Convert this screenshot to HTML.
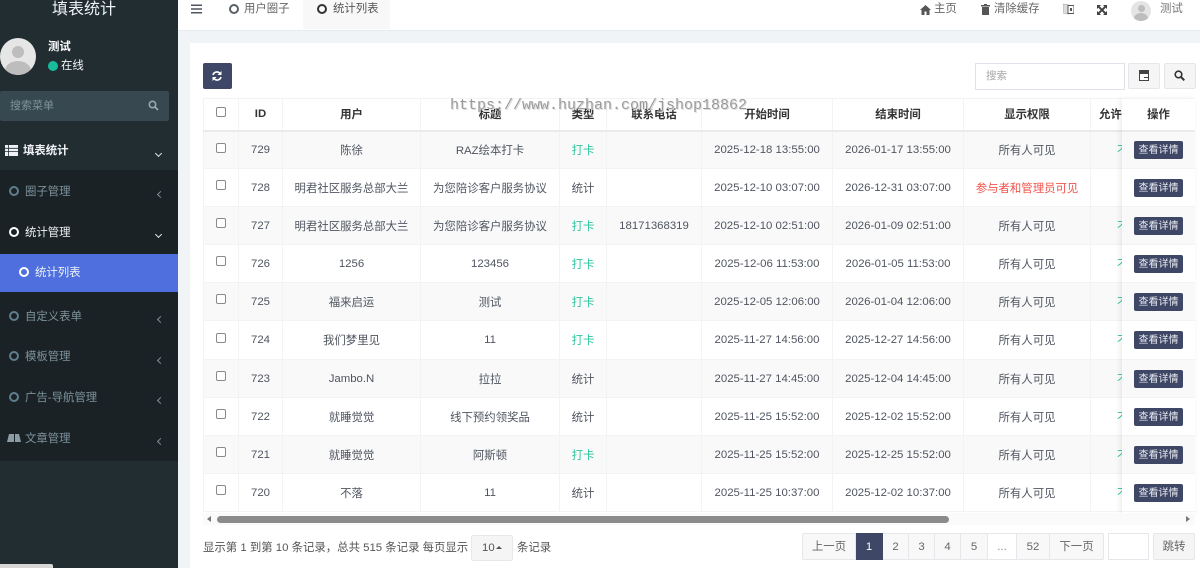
<!DOCTYPE html>
<html lang="zh">
<head>
<meta charset="utf-8">
<title>填表统计</title>
<style>
*{box-sizing:border-box;margin:0;padding:0}
html,body{width:1200px;height:568px;overflow:hidden;background:#f1f4f6}
body{position:relative;font-family:"Liberation Sans","Noto Sans CJK SC",sans-serif;font-size:11.4px;color:#4f5560}
.a{position:absolute;white-space:nowrap}
#side{position:absolute;left:0;top:0;width:178px;height:568px;background:#222d32;overflow:hidden}
#dark{position:absolute;left:0;top:170px;width:178px;height:291px;background:#1a2226}
#act{position:absolute;left:0;top:254px;width:178px;height:38px;background:#4e6fdd}
.m{position:absolute;left:25px;color:#7d929c;line-height:16px;white-space:nowrap;margin-top:1px}
.o{position:absolute;left:9px;width:10px;height:10px;border:2px solid #5f7e8e;border-radius:50%}
.c{position:absolute;left:158px;width:5px;height:5px;border-left:1px solid #7d929c;border-bottom:1px solid #7d929c;transform:rotate(45deg)}
.d{position:absolute;left:156px;width:5px;height:5px;border-left:1.5px solid #dfe6ea;border-bottom:1.5px solid #dfe6ea;transform:rotate(-45deg)}
#top{position:absolute;left:178px;top:0;width:1022px;height:31px;background:#fff;border-bottom:1px solid #e8ebee}
#panel{position:absolute;left:190px;top:43px;width:1010px;height:525px;background:#fff}
table{border-collapse:collapse;table-layout:fixed;position:absolute}
td,th{border:1px solid #f2f3f4;text-align:center;white-space:nowrap;overflow:hidden;font-weight:400;vertical-align:middle;color:#4f5560}
th{font-weight:700;color:#333;height:32px;border-bottom:2px solid #e9eaec}
td{height:38px}
tr.t td{height:39px}
tr.s td{background:#f9f9f9}
.g{color:#2ec4a0}
td.r{color:#f4524a}
td.g{color:#2ec4a0}
.cb{display:inline-block;position:relative;top:-2px;width:10px;height:10px;border:1px solid #8a8a8a;border-radius:2px;background:#fff;vertical-align:middle}
.al{text-align:left;padding-left:26px}
.b{display:inline-block;width:49px;height:18px;line-height:19px;background:#3f4766;color:#e9ebf0;border-radius:2px;font-size:10px;vertical-align:middle}
.p{position:absolute;top:533px;height:27px;line-height:27px;text-align:center;background:#f8f8f8;border:1px solid #e5e7ea;border-left:0;color:#666}
#wm{position:absolute;left:450px;top:97px;font-family:"Liberation Mono",monospace;font-size:15px;color:#999;white-space:nowrap;text-shadow:0 0 1px #fff,1px 1px 0 #d8d8d8}
</style>
</head>
<body>
<div id="side">
  <div class="a" style="left:52px;top:1px;font-size:16px;line-height:18px;color:#eef2f4">填表统计</div>
  <div class="a" style="left:0;top:38px;width:36px;height:37px;border-radius:50%;background:#e6e6e6;overflow:hidden">
    <div style="position:absolute;left:12px;top:8px;width:12px;height:12px;border-radius:50%;background:#bdbdbd"></div>
    <div style="position:absolute;left:5px;top:23px;width:26px;height:20px;border-radius:50%;background:#bdbdbd"></div>
  </div>
  <div class="a" style="left:48px;top:39px;color:#fff;font-weight:700;line-height:16px">测试</div>
  <div class="a" style="left:48px;top:61px;width:10px;height:10px;border-radius:50%;background:#18bc9c"></div>
  <div class="a" style="left:61px;top:58px;color:#f0f3f5;line-height:16px">在线</div>
  <div class="a" style="left:0;top:91px;width:169px;height:30px;background:#374850;border-radius:2px"></div>
  <div class="a" style="left:10px;top:98px;color:#7f939d;line-height:16px;font-size:11px">搜索菜单</div>
  <svg class="a" style="left:148px;top:100px" width="11" height="11" viewBox="0 0 11 11"><circle cx="4.5" cy="4.5" r="3.2" fill="none" stroke="#98a8b0" stroke-width="1.6"/><path d="M7 7l3 3" stroke="#98a8b0" stroke-width="1.8"/></svg>

  <svg class="a" style="left:5px;top:145px" width="13" height="11" viewBox="0 0 13 11"><path d="M0 0h13v11H0z" fill="#eef2f4"/><path d="M0 3.3h13M0 6.6h13M3.4 0v11" stroke="#222d32" stroke-width=".8"/></svg>
  <div class="a" style="left:23px;top:143px;color:#f0f3f5;font-weight:700;line-height:16px">填表统计</div>
  <div class="d" style="top:151px"></div>
  <div id="dark"></div>
  <div id="act"></div>

  <div class="o" style="top:186px"></div><div class="m" style="top:183px">圈子管理</div><div class="c" style="top:192px"></div>
  <div class="o" style="top:227px;border-color:#fff"></div><div class="m" style="top:224px;color:#eef2f4">统计管理</div><div class="d" style="top:232px"></div>
  <div class="o" style="top:267px;left:19px;border-color:#fff"></div><div class="m" style="top:264px;left:35px;color:#eef2f4">统计列表</div>
  <div class="o" style="top:311px"></div><div class="m" style="top:308px">自定义表单</div><div class="c" style="top:317px"></div>
  <div class="o" style="top:351px"></div><div class="m" style="top:348px">模板管理</div><div class="c" style="top:358px"></div>
  <div class="o" style="top:392px"></div><div class="m" style="top:389px">广告-导航管理</div><div class="c" style="top:398px"></div>
  <svg class="a" style="left:7px;top:433px" width="14" height="10" viewBox="0 0 14 10"><path d="M2 1h5v8H0zM8 1h4l2 8H8z" fill="#8a9ca6"/></svg>
  <div class="m" style="top:430px">文章管理</div><div class="c" style="top:439px"></div>
  <div class="a" style="left:0;top:564px;width:53px;height:4px;background:#d6d6d6;border-radius:0 2px 0 0"></div>
</div>

<div id="top">
  <svg class="a" style="left:13px;top:4px" width="11" height="10" viewBox="0 0 11 10"><path d="M0 1.2h11M0 5h11M0 8.8h11" stroke="#4f5560" stroke-width="1.5"/></svg>
  <div class="a" style="left:51px;top:4px;width:10px;height:10px;border:2px solid #5a6068;border-radius:50%"></div>
  <div class="a" style="left:66px;top:2px;line-height:15px;color:#666">用户圈子</div>
  <div class="a" style="left:125px;top:0;width:87px;height:29px;background:#f8f8f8"></div>
  <div class="a" style="left:139px;top:4px;width:10px;height:10px;border:2px solid #333;border-radius:50%"></div>
  <div class="a" style="left:155px;top:2px;line-height:15px;color:#555">统计列表</div>

  <svg class="a" style="left:742px;top:5px" width="11" height="10" viewBox="0 0 11 10"><path d="M5.5 0L11 5H9.500V10H6.500V6.500H4.500V10H1.500V5H0z" fill="#555"/></svg>
  <div class="a" style="left:756px;top:2px;line-height:15px;color:#666">主页</div>
  <svg class="a" style="left:803px;top:4px" width="9" height="11" viewBox="0 0 9 11"><path d="M3 0h3v1h3v1.500H0V1h3zM1 3h7v8H1z" fill="#555"/></svg>
  <div class="a" style="left:816px;top:2px;line-height:15px;color:#666">清除缓存</div>
  <svg class="a" style="left:885px;top:3px" width="11" height="12" viewBox="0 0 11 12"><path d="M0 1l6 1v9l-6-1z" fill="#ddd" stroke="#999" stroke-width=".6"/><path d="M5 2.500h6V10.500H5z" fill="#fff" stroke="#555" stroke-width="1"/><path d="M7 5h2v3H7z" fill="#555"/></svg>
  <svg class="a" style="left:919px;top:5px" width="10" height="10" viewBox="0 0 10 10"><path d="M0 0h4L2.700 1.300 5 3.600 7.300 1.300 6 0h4v4L8.700 2.700 6.400 5 8.700 7.300 10 6v4H6L7.300 8.700 5 6.400 2.700 8.700 4 10H0V6L1.300 7.300 3.600 5 1.300 2.700 0 4z" fill="#444"/></svg>
  <div class="a" style="left:953px;top:1px;width:20px;height:20px;border-radius:50%;background:#e4e4e4;overflow:hidden">
    <div style="position:absolute;left:6.500px;top:4px;width:7px;height:7px;border-radius:50%;background:#bdbdbd"></div>
    <div style="position:absolute;left:3px;top:12px;width:14px;height:11px;border-radius:50%;background:#bdbdbd"></div>
  </div>
  <div class="a" style="left:982px;top:2px;line-height:15px;color:#777">测试</div>
</div>

<div id="panel"></div>

<div class="a" style="left:203px;top:63px;width:29px;height:26px;background:#3f4766;border-radius:2px"></div>
<svg class="a" style="left:212px;top:71px" width="10" height="10" viewBox="0 0 10 10"><path d="M1 4A4 4 0 0 1 8 2.500M9 6A4 4 0 0 1 2 7.500" fill="none" stroke="#fff" stroke-width="1.600"/><path d="M9.500 0v4h-4zM.5 10V6h4z" fill="#fff"/></svg>

<div class="a" style="left:975px;top:63px;width:150px;height:27px;background:#fff;border:1px solid #dfe2e8"></div>
<div class="a" style="left:986px;top:68px;line-height:16px;color:#a5a5a5;font-size:10.500px">搜索</div>
<div class="a" style="left:1128px;top:63px;width:32px;height:26px;background:#f5f5f5;border:1px solid #e4e6e9;border-radius:2px"></div>
<svg class="a" style="left:1139px;top:70px" width="11" height="11" viewBox="0 0 11 11"><path d="M.5.5h9v10h-9z" fill="#fff" stroke="#444"/><path d="M1 1h8v3H1zM5 7h4v1H5z" fill="#444"/></svg>
<div class="a" style="left:1164px;top:63px;width:32px;height:26px;background:#f5f5f5;border:1px solid #e4e6e9;border-radius:2px"></div>
<svg class="a" style="left:1174px;top:70px" width="11" height="11" viewBox="0 0 11 11"><circle cx="4.500" cy="4.500" r="3.300" fill="none" stroke="#333" stroke-width="1.600"/><path d="M7 7l3.300 3.300" stroke="#333" stroke-width="2"/></svg>

<div class="a" style="left:203px;top:98px;width:919px;height:414px;overflow:hidden">
<table style="left:0;top:0;width:987px">
<colgroup><col style="width:35px"><col style="width:44px"><col style="width:138px"><col style="width:139px"><col style="width:47px"><col style="width:95px"><col style="width:131px"><col style="width:131px"><col style="width:127px"><col style="width:100px"></colgroup>
<tr><th><span class="cb"></span></th><th>ID</th><th>用户</th><th>标题</th><th>类型</th><th>联系电话</th><th>开始时间</th><th>结束时间</th><th>显示权限</th><th class="al" style="padding-left:8px">允许填写</th></tr>
<tr class="s"><td><span class="cb"></span></td><td>729</td><td>陈徐</td><td>RAZ绘本打卡</td><td class="g">打卡</td><td></td><td>2025-12-18 13:55:00</td><td>2026-01-17 13:55:00</td><td>所有人可见</td><td class="al g">不允许</td></tr>
<tr><td><span class="cb"></span></td><td>728</td><td>明君社区服务总部大兰</td><td>为您陪诊客户服务协议</td><td>统计</td><td></td><td>2025-12-10 03:07:00</td><td>2026-12-31 03:07:00</td><td class="r">参与者和管理员可见</td><td></td></tr>
<tr class="s"><td><span class="cb"></span></td><td>727</td><td>明君社区服务总部大兰</td><td>为您陪诊客户服务协议</td><td class="g">打卡</td><td>18171368319</td><td>2025-12-10 02:51:00</td><td>2026-01-09 02:51:00</td><td>所有人可见</td><td class="al g">不允许</td></tr>
<tr><td><span class="cb"></span></td><td>726</td><td>1256</td><td>123456</td><td class="g">打卡</td><td></td><td>2025-12-06 11:53:00</td><td>2026-01-05 11:53:00</td><td>所有人可见</td><td class="al g">不允许</td></tr>
<tr class="s"><td><span class="cb"></span></td><td>725</td><td>福来启运</td><td>测试</td><td class="g">打卡</td><td></td><td>2025-12-05 12:06:00</td><td>2026-01-04 12:06:00</td><td>所有人可见</td><td class="al g">不允许</td></tr>
<tr class="t"><td><span class="cb"></span></td><td>724</td><td>我们梦里见</td><td>11</td><td class="g">打卡</td><td></td><td>2025-11-27 14:56:00</td><td>2025-12-27 14:56:00</td><td>所有人可见</td><td class="al g">不允许</td></tr>
<tr class="s"><td><span class="cb"></span></td><td>723</td><td>Jambo.N</td><td>拉拉</td><td>统计</td><td></td><td>2025-11-27 14:45:00</td><td>2025-12-04 14:45:00</td><td>所有人可见</td><td class="al g">不允许</td></tr>
<tr><td><span class="cb"></span></td><td>722</td><td>就睡觉觉</td><td>线下预约领奖品</td><td>统计</td><td></td><td>2025-11-25 15:52:00</td><td>2025-12-02 15:52:00</td><td>所有人可见</td><td class="al g">不允许</td></tr>
<tr class="s"><td><span class="cb"></span></td><td>721</td><td>就睡觉觉</td><td>阿斯顿</td><td class="g">打卡</td><td></td><td>2025-11-25 15:52:00</td><td>2025-12-25 15:52:00</td><td>所有人可见</td><td class="al g">不允许</td></tr>
<tr><td><span class="cb"></span></td><td>720</td><td>不落</td><td>11</td><td>统计</td><td></td><td>2025-11-25 10:37:00</td><td>2025-12-02 10:37:00</td><td>所有人可见</td><td class="al g">不允许</td></tr>
</table>
</div>

<div class="a" style="left:1122px;top:98px;width:73px;height:416px;background:#fff;box-shadow:-3px 0 5px rgba(0,0,0,.05),0 2px 4px rgba(0,0,0,.04);overflow:hidden">
<table style="left:0;top:0;width:73px">
<tr><th style="border-left:0;border-right:0">操作</th></tr>
<tr class="s"><td style="border-left:0;border-right:0"><span class="b">查看详情</span></td></tr>
<tr><td style="border-left:0;border-right:0"><span class="b">查看详情</span></td></tr>
<tr class="s"><td style="border-left:0;border-right:0"><span class="b">查看详情</span></td></tr>
<tr><td style="border-left:0;border-right:0"><span class="b">查看详情</span></td></tr>
<tr class="s"><td style="border-left:0;border-right:0"><span class="b">查看详情</span></td></tr>
<tr class="t"><td style="border-left:0;border-right:0"><span class="b">查看详情</span></td></tr>
<tr class="s"><td style="border-left:0;border-right:0"><span class="b">查看详情</span></td></tr>
<tr><td style="border-left:0;border-right:0"><span class="b">查看详情</span></td></tr>
<tr class="s"><td style="border-left:0;border-right:0"><span class="b">查看详情</span></td></tr>
<tr><td style="border-left:0;border-right:0"><span class="b">查看详情</span></td></tr>
</table>
</div>

<div id="wm">https://www.huzhan.com/jshop18862</div>

<div class="a" style="left:203px;top:513px;width:992px;height:12px;background:#fafafa"></div>
<div class="a" style="left:207px;top:516px;width:0;height:0;border:3px solid transparent;border-right:4px solid #777;border-left:0"></div>
<div class="a" style="left:217px;top:516px;width:732px;height:7px;background:#8b8b8b;border-radius:4px"></div>
<div class="a" style="left:1186px;top:516px;width:0;height:0;border:3px solid transparent;border-left:4px solid #777;border-right:0"></div>

<div class="a" style="left:203px;top:540px;line-height:16px;color:#555">显示第 1 到第 10 条记录，总共 515 条记录 每页显示</div>
<div class="a" style="left:471px;top:535px;width:42px;height:26px;background:#f5f5f5;border:1px solid #e6e8ea;border-radius:2px;line-height:25px;padding-left:10px;color:#555">10</div>
<div class="a" style="left:496px;top:546px;width:0;height:0;border:3px solid transparent;border-bottom:3px solid #555;border-top:0"></div>
<div class="a" style="left:517px;top:540px;line-height:16px;color:#555">条记录</div>

<div class="p" style="left:802px;width:54px;border-left:1px solid #e5e7ea;border-radius:2px 0 0 2px">上一页</div>
<div class="p" style="left:856px;width:27px;background:#3f4766;color:#fff;border-color:#3f4766">1</div>
<div class="p" style="left:883px;width:26px">2</div>
<div class="p" style="left:909px;width:26px">3</div>
<div class="p" style="left:935px;width:26px">4</div>
<div class="p" style="left:961px;width:27px">5</div>
<div class="p" style="left:988px;width:29px;background:#fff;color:#888">...</div>
<div class="p" style="left:1017px;width:33px">52</div>
<div class="p" style="left:1050px;width:54px;border-radius:0 2px 2px 0">下一页</div>
<div class="a" style="left:1108px;top:533px;width:41px;height:27px;background:#fff;border:1px solid #e5e7ea"></div>
<div class="a" style="left:1153px;top:533px;width:42px;height:27px;line-height:27px;text-align:center;background:#f5f5f5;border:1px solid #e5e7ea;border-radius:2px;color:#666">跳转</div>
</body>
</html>
